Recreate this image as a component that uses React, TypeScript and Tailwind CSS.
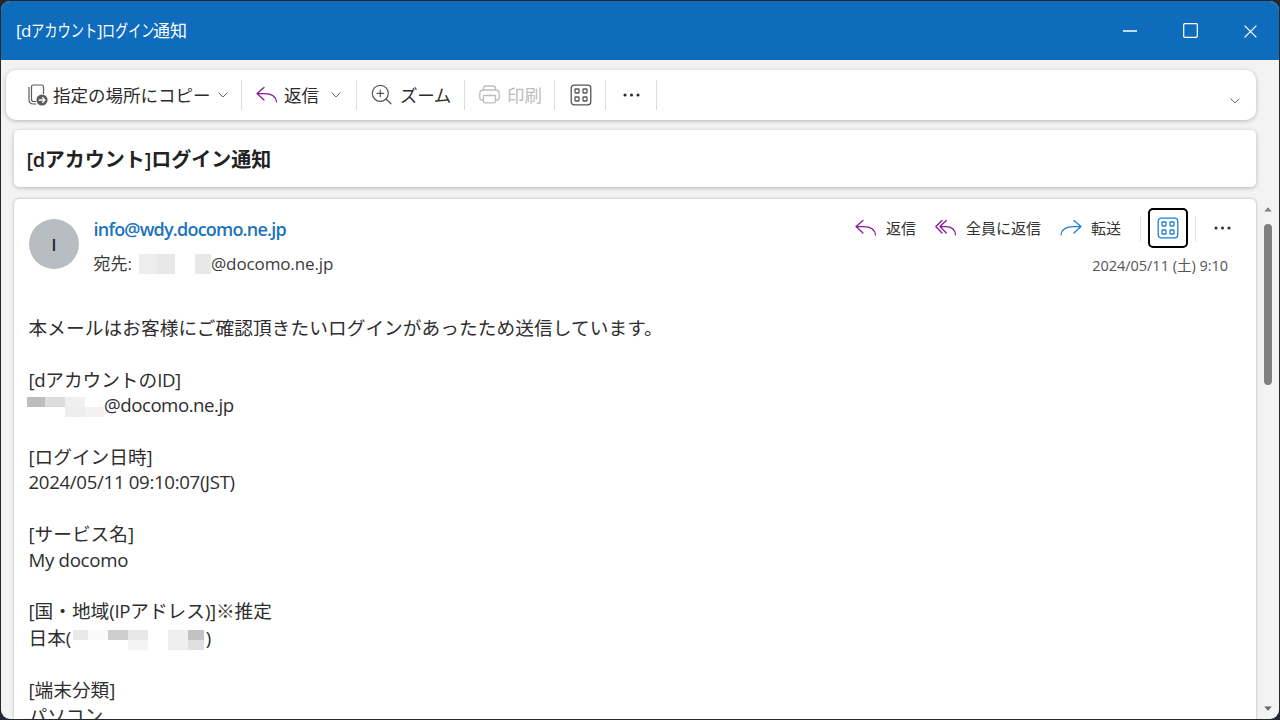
import type { ReactNode } from 'react'

interface IconProps {
  className?: string
}

interface MosaicProps {
  /** Grid template, written out as Tailwind classes */
  className: string
  /** One background class per cell, row by row */
  cells: string[]
}

function ReplyIcon({ className = '' }: IconProps) {
  return (
    <svg className={className} width="22" height="18" viewBox="0 0 22 18" fill="none" stroke="currentColor" strokeWidth="1.25" strokeLinecap="round" strokeLinejoin="round">
      <path d="M8 1.5 1 7.5l7 6.5M1.4 7.5H8.5c7 0 11.4 2.6 12 8.3" />
    </svg>
  )
}

function ReplyAllIcon({ className = '' }: IconProps) {
  return (
    <svg className={className} width="22" height="18" viewBox="0 0 22 18" fill="none" stroke="currentColor" strokeWidth="1.25" strokeLinecap="round" strokeLinejoin="round">
      <path d="M7 1.5 .8 7.5 7 14M11.3 1.5 5 7.5l6.3 6.5M5.4 7.5H10.5c6 0 9.6 2.8 10 8.3" />
    </svg>
  )
}

function ForwardIcon({ className = '' }: IconProps) {
  return (
    <svg className={className} width="22" height="18" viewBox="0 0 22 18" fill="none" stroke="currentColor" strokeWidth="1.25" strokeLinecap="round" strokeLinejoin="round">
      <path d="m14 1.5 7 6-7 6.500M20.600 7.500H13.500C6.500 7.500 1.600 10 1 15.800" />
    </svg>
  )
}

function AppsIcon({ className = '' }: IconProps) {
  return (
    <svg className={className} width="22" height="22" viewBox="0 0 22 22" fill="none" stroke="currentColor" strokeWidth="1.3">
      <rect x="1.2" y="1.2" width="19.6" height="19.6" rx="3" />
      <rect x="5" y="5" width="4" height="4" rx=".7" />
      <rect x="13" y="5" width="4" height="4" rx=".7" />
      <rect x="5" y="13" width="4" height="4" rx=".7" />
      <rect x="13" y="13" width="4" height="4" rx=".7" />
    </svg>
  )
}

function CopyToIcon() {
  return (
    <svg className="text-[#5c5c5c]" width="20" height="22" viewBox="0 0 20 22" fill="none" stroke="currentColor" strokeWidth="1.2">
      <path d="M8 17.500H5.500c-1.300 0-2-.7-2-2V3c0-1.300.7-2 2-2h8c1.300 0 2 .7 2 2v7" />
      <path d="M1 3v12.500c0 3 1.500 4.500 4.500 4.500h2.700" />
      <circle cx="14" cy="16" r="5.600" fill="currentColor" stroke="none" />
      <path d="M10.800 16h5.700M14.200 13.200l2.700 2.800-2.700 2.800" stroke="#fff" strokeWidth="1.300" />
    </svg>
  )
}

function ZoomInIcon() {
  return (
    <svg className="-mt-[2px] text-[#555]" width="21" height="21" viewBox="0 0 21 21" fill="none" stroke="currentColor" strokeWidth="1.2" strokeLinecap="round">
      <circle cx="9.300" cy="9.300" r="8" />
      <path d="m15 15 5 4.800M9.300 6v6.600M6 9.300h6.600" />
    </svg>
  )
}

function PrinterIcon() {
  return (
    <svg width="21" height="20" viewBox="0 0 21 20" fill="none" stroke="currentColor" strokeWidth="1.3" strokeLinejoin="round">
      <path d="M4.500 5V3.300c0-1.500.8-2.300 2.300-2.300h7.400c1.500 0 2.300.8 2.300 2.300V5" />
      <path d="M4.500 15H3c-1.500 0-2.200-.8-2.200-2.200V8.500C.8 6.200 2 5 4.300 5h12.400c2.300 0 3.500 1.200 3.500 3.500v4.300c0 1.400-.7 2.200-2.200 2.200h-1.500" />
      <path d="M4.500 10.500h12v5.700c0 1-.6 1.600-1.600 1.600H6.100c-1 0-1.600-.6-1.600-1.600z" />
    </svg>
  )
}

function ChevronIcon({ className = '' }: IconProps) {
  return (
    <svg className={className} width="10" height="6" viewBox="0 0 10 6" fill="none" stroke="#666" strokeWidth="1">
      <path d="M.6.600 5 5 9.400.600" />
    </svg>
  )
}

function DotsIcon({ className = '' }: IconProps) {
  return (
    <svg className={className} width="17" height="4" viewBox="0 0 17 4" fill="currentColor">
      <circle cx="2" cy="2" r="1.550" />
      <circle cx="8.500" cy="2" r="1.550" />
      <circle cx="15" cy="2" r="1.550" />
    </svg>
  )
}

function Divider({ className = '' }: IconProps) {
  return <div className={`w-px shrink-0 bg-[#dcdcdc] ${className}`} />
}

/** Pixelated block that hides a private part of an address */
function Mosaic({ className, cells }: MosaicProps) {
  return (
    <div className={`grid shrink-0 ${className}`}>
      {cells.map((cell, i) => (
        <div key={i} className={cell} />
      ))}
    </div>
  )
}

function Line({ children, className = 'h-[25.73px]' }: { children?: ReactNode; className?: string }) {
  return <div className={`flex items-center whitespace-pre ${className}`}>{children}</div>
}

function TitleBar() {
  return (
    <header className="flex h-[59px] shrink-0 items-center bg-[#0f6cbd] pl-[15px] text-white">
      {/* Kana is condensed, kanji keeps its full width */}
      <h1 className="flex flex-1 pt-px text-[17px] leading-6 whitespace-nowrap">
        <span className="w-[15px] tracking-[-0.5px]">[d</span>
        <span className="w-[66px] origin-left scale-x-[0.78]">アカウント</span>
        <span className="w-[5px]">]</span>
        <span className="w-[51px] origin-left scale-x-[0.77]">ログイン</span>
        <span>通知</span>
      </h1>
      <div className="-mr-px flex">
        <button className="flex h-[59px] w-[60px] items-center justify-center">
          <svg width="14" height="2" viewBox="0 0 14 2"><path d="M0 1h14" stroke="#fff" strokeWidth="1.500" /></svg>
        </button>
        <button className="flex h-[59px] w-[60px] items-center justify-center">
          <svg width="15" height="15" viewBox="0 0 15 15"><rect x=".7" y=".7" width="13.600" height="13.600" rx="1" fill="none" stroke="#fff" strokeWidth="1.200" /></svg>
        </button>
        <button className="flex h-[59px] w-[60px] items-center justify-center pt-px">
          <svg width="13" height="13" viewBox="0 0 13 13"><path d="m.6.600 11.800 11.800M12.400.600.600 12.400" stroke="#fff" strokeWidth="1.300" /></svg>
        </button>
      </div>
    </header>
  )
}

function Ribbon() {
  return (
    <div className="mt-[10px] ml-[5px] flex h-[50px] w-[1250px] shrink-0 items-center rounded-[10px] bg-white text-[17.5px] leading-6 text-[#2b2b2b] shadow-[0_1px_4px_rgba(0,0,0,0.25)]">
      <div className="flex w-[235px] items-center pl-[22px]">
        <CopyToIcon />
        <span className="ml-[5px] w-[159px]">指定の場所にコピー</span>
        <ChevronIcon className="ml-[6px]" />
      </div>
      <Divider className="h-[30px]" />
      <div className="flex w-[114px] items-center pl-[14px]">
        <ReplyIcon className="text-[#881798]" />
        <span className="ml-[6px]">返信</span>
        <ChevronIcon className="ml-[12px]" />
      </div>
      <Divider className="h-[30px]" />
      <div className="flex w-[107px] items-center pl-[14px]">
        <ZoomInIcon />
        <span className="ml-[8px] tracking-[-0.3px]">ズーム</span>
      </div>
      <Divider className="h-[30px]" />
      <div className="flex w-[89px] items-center pl-[14px] text-[#bdbdbd]">
        <PrinterIcon />
        <span className="ml-[7px]">印刷</span>
      </div>
      <Divider className="h-[30px]" />
      <div className="-mt-px flex w-[51px] justify-center text-[#555]">
        <AppsIcon />
      </div>
      <Divider className="-ml-px h-[30px]" />
      <div className="-mt-px flex w-[50px] justify-center">
        <DotsIcon />
      </div>
      <Divider className="h-[30px]" />
      <ChevronIcon className="mt-[12px] mr-[16px] ml-auto" />
    </div>
  )
}

function MessageHeader() {
  return (
    <div className="flex h-[111px] pt-[8px]">
      <div className="mt-[12px] ml-[15px] flex size-[50px] items-center justify-center rounded-full bg-[#b7bec3] pt-px text-base font-semibold text-[#222]">
        I
      </div>
      <div className="ml-[14.5px] pt-[9px]">
        <p className="h-[27px] text-[18px] leading-[27px] font-semibold tracking-[-0.78px] text-[#1b74be]">info@wdy.docomo.ne.jp</p>
        <div className="mt-[8px] flex h-[26px] items-center text-[17px] leading-[26px] text-[#3b3b3b]">
          <span className="w-[45.5px] whitespace-nowrap">宛先:</span>
          <Mosaic className="h-[20px] grid-cols-[18px_18px]" cells={['bg-[#ededed]', 'bg-[#e8e8e8]']} />
          <Mosaic className="ml-[20px] h-[20px] grid-cols-[16px]" cells={['bg-[#e8e8e8]']} />
          <span className="tracking-[-0.12px]">@docomo.ne.jp</span>
        </div>
      </div>
      <div className="mr-[25px] ml-auto">
        <div className="flex h-[42px] items-center text-[15px] text-[#333]">
          <ReplyIcon className="text-[#881798]" />
          <span className="ml-[9px]">返信</span>
          <ReplyAllIcon className="ml-[19px] text-[#881798]" />
          <span className="ml-[9px]">全員に返信</span>
          <ForwardIcon className="ml-[19px] text-[#1f7fd0]" />
          <span className="ml-[9px]">転送</span>
          <Divider className="ml-[19px] h-[25px]" />
          <button className="ml-[7px] flex size-[40px] items-center justify-center rounded-[5px] border-2 border-black text-[#1f7fd0]">
            <AppsIcon />
          </button>
          <Divider className="ml-[7px] h-[25px]" />
          <DotsIcon className="ml-[18px]" />
        </div>
        <p className="mt-[5px] mr-[3px] text-right text-[14.5px] leading-6 tracking-[-0.02px] text-[#555]">2024/05/11 (土) 9:10</p>
      </div>
    </div>
  )
}

function MessageBody() {
  return (
    <div className="mt-[5.3px] ml-[14.5px] text-[18.67px] leading-[26px] text-[#2e2e2e]">
      <Line><span className="tracking-[0.08px]">本メールはお客様にご確認頂きたいログインがあったため送信しています。</span></Line>
      <Line />
      <Line>
        <span className="tracking-[-0.4px]">[d</span>アカウントの<span className="tracking-[-0.4px]">ID]</span>
      </Line>
      <Line>
        <Mosaic
          className="mt-[3px] -ml-[1.5px] grid-cols-[18px_20px_20px_19px] grid-rows-[10px_10px]"
          cells={['bg-[#bdbdbd]', 'bg-[#dcdcdc]', 'bg-[#f0f0f0]', 'bg-white', 'bg-white', 'bg-white', 'bg-[#ededed]', 'bg-[#f2f2f2]']}
        />
        <span className="tracking-[-0.48px]">@docomo.ne.jp</span>
      </Line>
      <Line />
      <Line>[ログイン日時]</Line>
      <Line><span className="tracking-[-0.33px]">2024/05/11 09:10:07(JST)</span></Line>
      <Line />
      <Line>[サービス名]</Line>
      <Line><span className="tracking-[-0.3px]">My docomo</span></Line>
      <Line />
      <Line>
        [国・地域<span className="tracking-[-0.3px]">(IP</span>アドレス<span className="tracking-[-0.3px]">)]</span>※推定
      </Line>
      <Line className="h-[27.5px]">
        日本(
        <Mosaic
          className="mt-[5px] mr-[2px] ml-[1.5px] grid-cols-[15px_20px_20px_20px_20px_20px_16px] grid-rows-[10px_10px]"
          cells={[
            'bg-[#e9e9e9]', 'bg-[#fafafa]', 'bg-[#cecece]', 'bg-[#e8e8e8]', 'bg-white', 'bg-[#efefef]', 'bg-[#c2c2c2]',
            'bg-white', 'bg-white', 'bg-white', 'bg-[#f3f3f3]', 'bg-white', 'bg-[#efefef]', 'bg-[#e0e0e0]',
          ]}
        />
        )
      </Line>
      <Line />
      <Line>[端末分類]</Line>
      <Line>パソコン</Line>
    </div>
  )
}

function Scrollbar() {
  return (
    <div className="flex flex-1 flex-col items-center pt-[8px] pb-[8px] pl-px">
      <svg width="8" height="5" viewBox="0 0 8 5"><path d="M4 .200 7.800 4.500H.200z" fill="#808080" /></svg>
      <div className="mt-[12px] h-[161px] w-[8px] rounded-full bg-[#808080]" />
      <svg className="mt-auto" width="8" height="5" viewBox="0 0 8 5"><path d="M.2.500h7.600L4 4.800z" fill="#666" /></svg>
    </div>
  )
}

export default function App() {
  return (
    <div className="h-[720px] w-[1280px] overflow-hidden bg-[#22262d] p-px font-['Open_Sans','Noto_Sans_CJK_JP',sans-serif]" lang="ja">
      <div className="flex h-[718px] flex-col overflow-hidden rounded-[9px] bg-[#f3f3f3]">
        <TitleBar />
        <Ribbon />
        <section className="mt-[10px] ml-[13px] flex h-[57px] w-[1242px] shrink-0 items-center rounded-[5px] bg-white pt-[2px] pl-[12.5px] shadow-[0_1px_4px_rgba(0,0,0,0.25)]">
          <h2 className="text-[20px] leading-8 font-bold text-[#222]">
            <span className="font-semibold tracking-[-0.4px]">[d</span>アカウント<span className="font-semibold">]</span>ログイン通知
          </h2>
        </section>
        <div className="mt-[12px] flex min-h-0 flex-1">
          <main className="ml-[13px] w-[1242px] shrink-0 overflow-hidden rounded-t-[5px] bg-white shadow-[0_0_3px_rgba(0,0,0,0.3)]">
            <MessageHeader />
            <MessageBody />
          </main>
          <Scrollbar />
        </div>
      </div>
    </div>
  )
}
